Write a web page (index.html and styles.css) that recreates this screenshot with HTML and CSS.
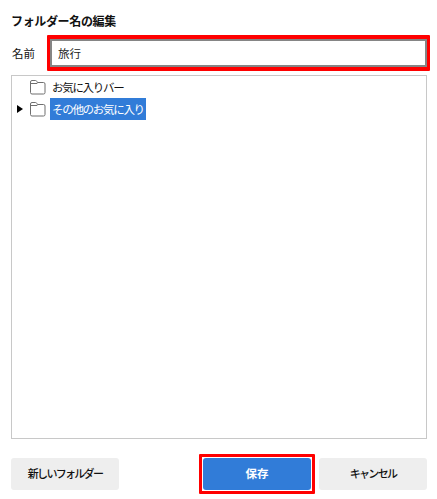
FILE: index.html
```html
<!DOCTYPE html>
<html lang="ja">
<head>
  <meta charset="UTF-8" />
  <title>フォルダー名の編集</title>
  <link rel="stylesheet" href="styles.css">
</head>
<body>
  <div class="dialog">
    <h2 class="title">フォルダー名の編集</h2>

    <div class="name-row">
      <label class="name-label">名前</label>
      <div class="marked">
        <input class="name-input" type="text" value="旅行" />
      </div>
    </div>

    <div class="tree">
      <div class="tree-row">
        <span class="arrow"></span>
        <svg class="folder" width="17" height="15" viewBox="0 0 17 15"><path d="M1.5 12.5V2Q1.5 .5 3 .5H6.5Q7.4 .5 7.8 1.3L8.3 2.5H14.5Q16 2.5 16 4V12.5Q16 14 14.5 14H3Q1.5 14 1.5 12.5ZM1.5 3.5H8.3" fill="none" stroke="#6f6f6f" stroke-width="1"/></svg>
        <span class="tree-text">お気に入りバー</span>
      </div>
      <div class="tree-row">
        <span class="arrow closed"></span>
        <svg class="folder" width="17" height="15" viewBox="0 0 17 15"><path d="M1.5 12.5V2Q1.5 .5 3 .5H6.5Q7.4 .5 7.8 1.3L8.3 2.5H14.5Q16 2.5 16 4V12.5Q16 14 14.5 14H3Q1.5 14 1.5 12.5ZM1.5 3.5H8.3" fill="none" stroke="#6f6f6f" stroke-width="1"/></svg>
        <span class="tree-text selected">その他のお気に入り</span>
      </div>
    </div>

    <div class="buttons">
      <button class="btn">新しいフォルダー</button>
      <div class="buttons-right">
        <div class="marked marked-btn">
          <button class="btn primary">保存</button>
        </div>
        <button class="btn">キャンセル</button>
      </div>
    </div>
  </div>
</body>
</html>
```

FILE: styles.css
```css
* {
  margin: 0;
  padding: 0;
  box-sizing: border-box;
  font-family: "Noto Sans CJK JP", "Liberation Sans", sans-serif;
}

body {
  background: #fff;
  color: #111;
}

.dialog {
  width: 437px;
  height: 499px;
  padding: 12px 10px 10px 11px;
}

.title {
  font-size: 12px;
  line-height: 18px;
  font-weight: 700;
  letter-spacing: -0.35px;
}

.name-row {
  display: flex;
  align-items: center;
  margin-top: 9px;
  height: 28px;
}

.name-label {
  width: 40px;
  padding-left: 1px;
  font-size: 11.5px;
}

.name-input {
  display: block;
  width: 377px;
  height: 28px;
  border: 2px solid #858585;
  padding: 0 6px;
  font-size: 11.5px;
  color: #222;
  outline: none;
}

/* red annotation frame drawn over the screenshot */
.marked {
  position: relative;
}

.marked::after {
  content: "";
  position: absolute;
  top: -4px;
  right: -3px;
  bottom: -4px;
  left: -3px;
  border: solid #f00;
  border-width: 4px 3px;
  border-radius: 1px;
}

.marked-btn::after {
  right: -4px;
  left: -4px;
  border-width: 3px;
}

.tree {
  width: 416px;
  height: 364px;
  margin-top: 8px;
  border: 1px solid #c8c8c8;
  padding-left: 5px;
}

.tree-row {
  display: flex;
  align-items: center;
  height: 22px;
}

.arrow {
  width: 6px;
  height: 8px;
  margin-right: 6px;
}

.arrow.closed {
  border-left: 6px solid #000;
  border-top: 4px solid transparent;
  border-bottom: 4px solid transparent;
}

.folder {
  margin-right: 4px;
  flex-shrink: 0;
}

.tree-text {
  font-size: 11.5px;
  letter-spacing: -1.3px;
  line-height: 22px;
  padding: 0 2px;
  white-space: nowrap;
}

.selected {
  background: #317cd8;
  color: #fff;
}

.buttons {
  display: flex;
  justify-content: space-between;
  width: 416px;
  margin-top: 19px;
}

.buttons-right {
  display: flex;
  gap: 8px;
}

.btn {
  display: block;
  width: 108px;
  height: 32px;
  border: none;
  border-radius: 3px;
  background: #eeeeee;
  color: #111;
  font-size: 11px;
  font-weight: 500;
  letter-spacing: -1.7px;
  padding-bottom: 3px;
}

.primary {
  background: #317cd8;
  color: #fff;
  font-size: 11.5px;
  font-weight: 700;
  letter-spacing: 0;
}
```
